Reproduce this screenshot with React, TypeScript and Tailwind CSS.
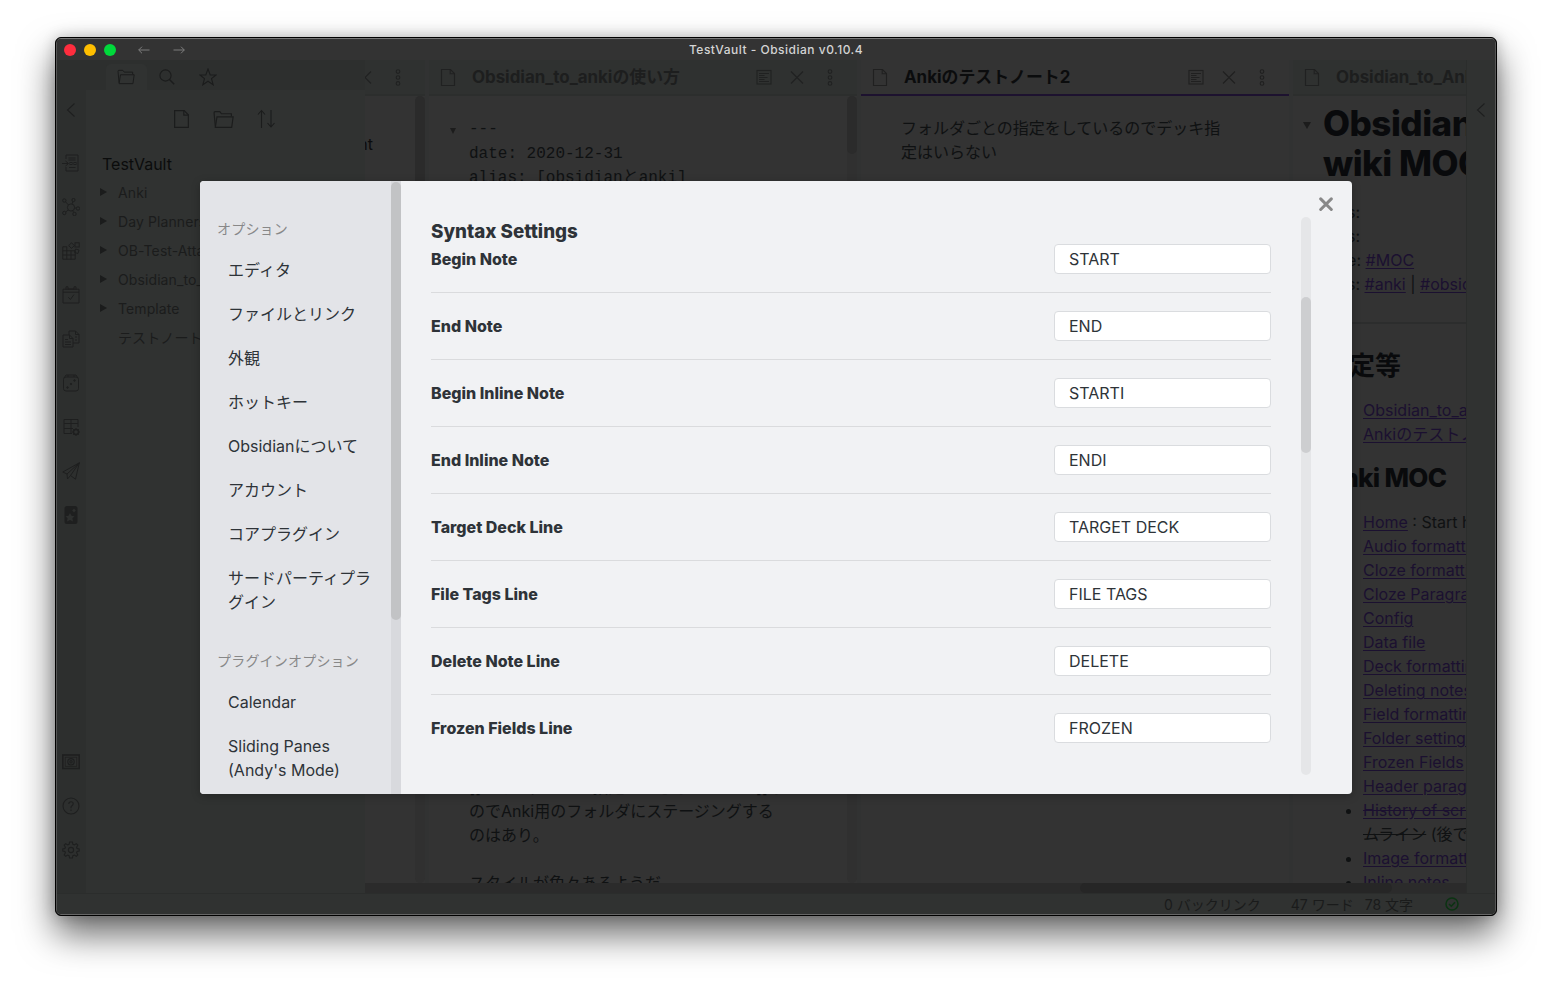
import React from "react";

type IconProps = { className?: string; children: React.ReactNode; box?: string; sw?: number };

function Icon({ className = "size-[18px]", children, box = "0 0 18 18", sw = 1.1 }: IconProps) {
  return (
    <svg
      viewBox={box}
      className={`shrink-0 ${className}`}
      fill="none"
      stroke="currentColor"
      strokeWidth={sw}
    >
      {children}
    </svg>
  );
}

const FileIcon = ({ className = "w-[16px] h-[19px]" }: { className?: string }) => (
  <Icon className={className} box="0 0 16 19">
    <path d="M1.5 1.5H10.5L14.5 5.5V17.5H1.5Z" />
    <path d="M10.2 1.5V5.8H14.5" />
  </Icon>
);

const FolderIcon = ({ className }: { className: string }) => (
  <Icon className={className} box="0 0 20 18">
    <path d="M2.2 15.5L1 2.5Q1 1.5 2 1.5H6.5L8 3.5H17.5V6" />
    <path d="M2.2 16.5L3.8 6.5H19.2L17.8 16.5Z" />
  </Icon>
);

const ChevronLeft = () => (
  <Icon className="h-[16px] w-[10px]" box="0 0 10 16">
    <path d="M8.5 1.5L1.5 8L8.5 14.5" />
  </Icon>
);

const PreviewIcon = () => (
  <Icon className="size-[16px]" box="0 0 16 16">
    <rect x="1" y="1.5" width="14" height="13.5" />
    <path d="M3 4.5H13M3 6.5H8.5M3 8.5H11.5M3 10.5H8.5M3 12.5H13" />
  </Icon>
);

const CloseIcon = () => (
  <Icon className="size-[14px]" box="0 0 14 14">
    <path d="M1 1.5L13 13.5M13 1.5L1 13.5" />
  </Icon>
);

const DotsIcon = () => (
  <Icon className="h-[17px] w-[6px]" box="0 0 6 17">
    <circle cx="3" cy="2.6" r="1.8" />
    <circle cx="3" cy="8.5" r="1.8" />
    <circle cx="3" cy="14.4" r="1.8" />
  </Icon>
);

const ribbonIcons: React.ReactNode[] = [
  <>
    <path d="M4 5V1H16V17H4V13" />
    <path d="M6.5 4H13.5M6.5 6H13.5M7 13.5H13.5M0 9.5H6M3.5 7L6.5 9.5L3.5 12" />
    <rect x="8" y="8.5" width="2" height="2" />
    <rect x="12" y="8.5" width="2" height="2" />
  </>,
  <>
    <circle cx="9" cy="9.5" r="3.6" />
    <circle cx="2.3" cy="2.5" r="1.7" />
    <circle cx="11.5" cy="2" r="1.6" />
    <circle cx="16" cy="10.5" r="1.7" />
    <circle cx="12.5" cy="16" r="1.7" />
    <circle cx="2.3" cy="15" r="1.7" />
    <path d="M3.5 3.8L6.5 7M10.9 3.5L10 6M12.5 9.8L14.4 10.2M10.5 12.7L11.8 14.4M6.3 12L3.6 14" />
  </>,
  <>
    <path d="M.8 4.8H4.8V8.8H13.2V17.2H.8ZM.8 8.8H4.8V17.2M.8 13H13.2M9 8.8V17.2" />
    <rect x="13" y=".8" width="4.2" height="4.2" />
    <path d="M9.5 .8L12.3 3.6L9.5 6.4L6.7 3.6Z" />
    <path d="M13.5 7L17 8L16 11.5L12.6 10.5Z" />
  </>,
  <>
    <path d="M1 3.2H17V17H1ZM1 6.2H17" />
    <path d="M4 3.5V.8H6V3.5M12 3.5V.8H14V3.5M6 3H12" />
    <path d="M6.3 11.2L8.4 13.5L12 8.5" />
  </>,
  <>
    <path d="M7 5V1H13.5L17 4.5V13H11M13.5 1V4.5H17" />
    <path d="M1 5H7.5L11 8.5V17H1ZM7.5 5V8.5H11" />
    <path d="M3 9.5H6M3 12H9M3 14.5H9M13 7H15M13 10H15" />
  </>,
  <>
    <rect x="1.5" y="3" width="15" height="14" rx="2.5" />
    <path d="M2 4L4 1H14L16 4M6 1V3M12 1V3" />
    <circle cx="5.5" cy="13.5" r=".7" fill="currentColor" />
    <circle cx="9" cy="10" r=".7" fill="currentColor" />
    <circle cx="12.5" cy="6.5" r=".7" fill="currentColor" />
  </>,
  <>
    <path d="M10 15.5H2V1.5H16V9M2 5.5H16M2 10.5H11M9 1.5V15.5" />
    <circle cx="14" cy="14" r="2.5" strokeWidth="1.4" />
    <path d="M14 10V12M14 16V18M10 14H12M16 14H18M11.2 11.2L12.5 12.5M15.5 15.5L16.8 16.8M16.8 11.2L15.5 12.5M12.5 15.5L11.2 16.8" />
  </>,
  <>
    <path d="M17.3 .8L.8 10L5 12L5.5 17L8.5 13.5L13.5 17.2Z" />
    <path d="M17.3 .8L5 12M17.3 .8L8.5 13.5" />
  </>,
  <>
    <path
      fill="currentColor"
      fillRule="evenodd"
      stroke="none"
      d="M5 0H13Q15.5 0 15.5 2.5V15.5Q15.5 18 13 18H5Q2.5 18 2.5 15.5V2.5Q2.5 0 5 0ZM8 7L9.5 9.8L12.5 10.2L10.4 12.3L11 15.4L8 14L5 15.4L5.6 12.3L3.5 10.2L6.5 9.8ZM12 2.5L10.2 4.5L12 6.5L13.8 4.5Z"
    />
  </>,
];

const ribbonBottom: React.ReactNode[] = [
  <>
    <rect x=".8" y="2" width="16.4" height="13.5" strokeWidth="1.6" />
    <rect x="3.2" y="4.2" width="11.6" height="9.1" strokeWidth=".8" />
    <circle cx="9" cy="8.8" r="3.2" />
    <circle cx="9" cy="8.8" r="1.2" />
  </>,
  <>
    <circle cx="9" cy="9" r="8" />
    <path d="M6.8 7Q6.8 4.8 9 4.8T11.2 6.8Q11.2 8 10 8.7T9 10.6V11.2M9 12.6V14" />
  </>,
  <>
    <circle cx="9" cy="9" r="2.6" />
    <path d="M7.6 1H10.4L10.9 3.3L12.3 3.9L14.3 2.7L15.8 4.2L14.6 6.2L15.1 7.5L17.2 8V10L15.1 10.5L14.6 11.8L15.8 13.8L14.3 15.3L12.3 14.1L10.9 14.7L10.4 17H7.6L7.1 14.7L5.7 14.1L3.7 15.3L2.2 13.8L3.4 11.8L2.9 10.5L.8 10V8L2.9 7.5L3.4 6.2L2.2 4.2L3.7 2.7L5.7 3.9L7.1 3.3Z" />
  </>,
];

function Ribbon() {
  return (
    <div className="flex w-[29px] shrink-0 flex-col items-center bg-[#2d2f2e] pr-[2px] text-[#1e1f1f]">
      <div className="mt-[42px] flex h-4 items-center">
        <ChevronLeft />
      </div>
      <div className="mt-[36px] flex flex-col gap-[26px]">
        {ribbonIcons.map((icon, i) => (
          <Icon key={i} sw={1}>{icon}</Icon>
        ))}
      </div>
      <div className="mt-auto mb-[34px] flex flex-col gap-[26px]">
        {ribbonBottom.map((icon, i) => (
          <Icon key={i} sw={1.1}>{icon}</Icon>
        ))}
      </div>
    </div>
  );
}

const folders = ["Anki", "Day Planners", "OB-Test-Attachments", "Obsidian_to_Anki", "Template"];

function Explorer() {
  return (
    <div className="flex w-[279px] shrink-0 flex-col bg-[#303231] text-[#1b1c1c]">
      <div className="flex h-[30px] shrink-0 items-end bg-[#2d2f2e] pl-[20px]">
        <div className="flex h-[26px] w-[41px] items-center justify-center rounded-t-[5px] bg-[#303231] pr-px">
          <FolderIcon className="h-[16px] w-[18px]" />
        </div>
        <div className="flex h-[26px] w-[41px] items-center justify-center pr-px">
          <Icon className="size-[16px]" box="0 0 16 16">
            <circle cx="6.5" cy="6.5" r="5.6" />
            <path d="M10.5 10.5L15.2 15.2" strokeWidth="1.5" />
          </Icon>
        </div>
        <div className="flex h-[26px] w-[41px] items-center justify-center pr-px">
          <Icon>
            <path d="M9 1L11.2 7H17L12.5 10.6L14.2 16.8L9 13.2L3.8 16.8L5.5 10.6L1 7H6.8Z" />
          </Icon>
        </div>
      </div>
      <div className="mt-[19px] flex h-5 items-center justify-center gap-[23px] pr-[3px]">
        <FileIcon className="h-[20px] w-[17px]" />
        <FolderIcon className="h-[19px] w-[21px]" />
        <Icon className="h-[20px] w-[19px]" box="0 0 19 20">
          <path d="M4.5 19V1.5M1 5.5L4.5 1.5L8 5.5M14 1V18M10.5 14L14 18L17.5 14" />
        </Icon>
      </div>
      <div className="mt-[23px] pl-4 text-base leading-6 text-[#0b0c0c]">TestVault</div>
      <div className="mt-[2px] text-[14px] leading-[29px] tracking-[0.1px] whitespace-nowrap">
        {folders.map((f) => (
          <div key={f} className="flex items-center pl-[14px]">
            <svg viewBox="0 0 7 8" className="mr-[11px] mb-[2px] h-2 w-[7px] shrink-0" fill="currentColor">
              <path d="M0 0L7 4L0 8Z" />
            </svg>
            {f}
          </div>
        ))}
        <div className="pl-8">テストノート</div>
      </div>
    </div>
  );
}

type PaneProps = {
  title: React.ReactNode;
  active?: boolean;
  children: React.ReactNode;
  scroll?: string;
};

function Pane({ title, active, children, scroll }: PaneProps) {
  return (
    <>
      <div className="flex w-[428px] shrink-0 flex-col">
        <div
          className={`flex h-9 shrink-0 items-center border-b-2 pr-6 pl-[11px] ${
            active
              ? "border-[#1d122f] bg-[#333333] text-[#202020]"
              : "border-[#2c2e2d] bg-[#2f3130] text-[#202121]"
          }`}
        >
          <FileIcon />
          <div
            className={`ml-4 flex-1 text-[16.9px] leading-6 font-bold whitespace-nowrap ${
              active ? "text-[#0b0c0d]" : "text-[#1d1e1e]"
            }`}
          >
            {title}
          </div>
          <PreviewIcon />
          <div className="ml-[18px]">
            <CloseIcon />
          </div>
          <div className="ml-[23px]">
            <DotsIcon />
          </div>
        </div>
        <div className="flex min-h-0 flex-1">
          <div className="min-w-0 flex-1 overflow-hidden">{children}</div>
          {scroll && (
            <div className="w-[10px] shrink-0 rounded-full bg-[#303030]">
              <div className={`w-full rounded-full bg-[#2b2b2b] ${scroll}`} />
            </div>
          )}
        </div>
      </div>
      <div className="w-1 shrink-0 bg-[#313232]" />
    </>
  );
}

const Link = ({ children }: { children: React.ReactNode }) => (
  <span className="text-[#1b1030] underline decoration-1 underline-offset-[2px]">{children}</span>
);

const wikiLinks = [
  "Audio formatting",
  "Cloze formatting",
  "Cloze Paragraph style",
  "Config",
  "Data file",
  "Deck formatting",
  "Deleting notes",
  "Field formatting",
  "Folder settings",
  "Frozen Fields",
  "Header paragraph style",
];

function Workspace() {
  return (
    <div className="flex min-w-0 flex-1 flex-col overflow-hidden bg-[#333333] text-[#0f1112]">
      <div className="flex min-h-0 flex-1 overflow-hidden">
        <div className="-ml-[368px] flex">
          <Pane title="Anki" scroll="h-[620px]">
            <div className="mt-[36px] w-[376px] text-right text-base leading-6 text-[#0b0c0d]">
              Attachment
            </div>
          </Pane>
          <Pane title="Obsidian_to_ankiの使い方" scroll="h-[58px]">
            <div className="pl-10 text-base whitespace-nowrap">
              <div className="relative mt-[21px] font-['Liberation_Mono','Noto_Sans_CJK_JP',monospace] leading-[24.5px]">
                <svg viewBox="0 0 6 6" className="absolute top-[11px] -left-[19px] size-[6px]" fill="#1c1c1c">
                  <path d="M0 0H6L3 6Z" />
                </svg>
                <div>---</div>
                <div>date: 2020-12-31</div>
                <div>alias: [obsidianとanki]</div>
              </div>
              <div className="mt-[584px] leading-6">
                <div>[[フォルダごとの指定ができる<span className="text-[#1b1030]">Obs Anki</span>]]な</div>
                <div>のでAnki用のフォルダにステージングする</div>
                <div>のはあり。</div>
                <div className="mt-6">スタイルが色々あるようだ</div>
              </div>
            </div>
          </Pane>
          <Pane title="Ankiのテストノート2" active>
            <div className="mt-5 w-[360px] pl-10 text-base leading-6">
              フォルダごとの指定をしているのでデッキ指定はいらない
            </div>
          </Pane>
          <Pane title="Obsidian_to_Anki wiki">
            <div className="relative pl-[30px] text-base leading-6 whitespace-nowrap">
              <svg viewBox="0 0 8 7" className="absolute top-[26px] left-[10px] h-[7px] w-2" fill="#1c1c1c">
                <path d="M0 0H8L4 7Z" />
              </svg>
              <h1 className="pt-[7px] text-[35px] leading-10 font-extrabold tracking-[-0.5px] text-[#090a0c]">
                Obsidian_to_Anki
                <br />
                wiki MOC
              </h1>
              <div className="mt-[17px] -ml-[4px]">
                <div>Tags:</div>
                <div>Tags:</div>
                <div>Type: <Link>#MOC</Link></div>
                <div>Tags: <Link>#anki</Link> | <Link>#obsidian</Link></div>
              </div>
              <div className="mt-[26px] h-[2px] bg-[#2c2d2d]" />
              <h2 className="mt-[23px] text-[26px] leading-[38px] font-bold text-[#090a0c]">設定等</h2>
              <ul className="mt-[13px] list-disc pl-10">
                <li><Link>Obsidian_to_ankiの使い方</Link></li>
                <li><Link>Ankiのテストノート</Link></li>
              </ul>
              <h2 className="mt-[13px] text-[26px] leading-[38px] font-extrabold tracking-[-0.7px] text-[#090a0c]">Anki MOC</h2>
              <ul className="mt-[13px] list-disc pl-10">
                <li><Link>Home</Link> : Start here</li>
                {wikiLinks.map((l) => (
                  <li key={l}><Link>{l}</Link></li>
                ))}
                <li>
                  <span className="text-[#1b1030] underline-offset-[2px] [text-decoration-line:underline_line-through]">History of script</span>
                  <br />
                  <span className="line-through">ムライン</span> (後で確認)
                </li>
                <li><Link>Image formatting</Link></li>
                <li><Link>Inline notes</Link></li>
              </ul>
            </div>
          </Pane>
        </div>
      </div>
      <div className="flex h-[10px] shrink-0 bg-[#2b2b2b] pl-[715px]">
        <div className="w-[312px] rounded-full bg-[#262626]" />
      </div>
    </div>
  );
}

const optionItems = [
  "エディタ",
  "ファイルとリンク",
  "外観",
  "ホットキー",
  "Obsidianについて",
  "アカウント",
  "コアプラグイン",
  "サードパーティプラグイン",
];

const settings: [string, string][] = [
  ["Begin Note", "START"],
  ["End Note", "END"],
  ["Begin Inline Note", "STARTI"],
  ["End Inline Note", "ENDI"],
  ["Target Deck Line", "TARGET DECK"],
  ["File Tags Line", "FILE TAGS"],
  ["Delete Note Line", "DELETE"],
  ["Frozen Fields Line", "FROZEN"],
];

function NavItem({ children }: { children: React.ReactNode }) {
  return <div className="py-[10px] pr-4 pl-7 text-base leading-6 break-all">{children}</div>;
}

function SettingsModal() {
  return (
    <div className="absolute top-[181px] left-[200px] flex h-[613px] w-[1152px] overflow-hidden rounded-[4px] bg-[#f1f2f4] text-[#2e3338] shadow-[0_2px_8px_rgba(0,0,0,0.25)]">
      <div className="w-[191px] shrink-0 overflow-hidden bg-[#e3e4e8]">
        <div className="mt-[38px] pl-[17px] text-[14px] leading-5 tracking-[0.2px] text-[#888888]">オプション</div>
        <div className="mt-[9px]">
          {optionItems.map((t) => (
            <NavItem key={t}>{t}</NavItem>
          ))}
        </div>
        <div className="mt-[27px] mb-[9px] pl-[17px] text-[14px] leading-5 tracking-[0.2px] text-[#888888]">プラグインオプション</div>
        <NavItem>Calendar</NavItem>
        <NavItem>
          Sliding Panes
          <br />
          (Andy's Mode)
        </NavItem>
      </div>
      <div className="w-[10px] shrink-0 bg-[#d8d9dd] pt-px">
        <div className="h-[438px] rounded-full bg-[#c2c3c5]" />
      </div>
      <div className="ml-[30px] w-[840px] shrink-0 pt-[38px]">
        <h3 className="text-[18.8px] leading-[25px] font-extrabold">Syntax Settings</h3>
        {settings.map(([label, value], i) => (
          <div
            key={label}
            className={`flex items-center justify-between pb-[18px] ${
              i === 0 ? "" : "border-t border-[#dadbdd] pt-[18px]"
            }`}
          >
            <div className="text-base font-extrabold">{label}</div>
            <input
              readOnly
              value={value}
              className="h-[30px] w-[217px] rounded-[4px] border border-[#dadcdf] bg-white px-[14px] text-base outline-none"
            />
          </div>
        ))}
      </div>
      <div className="mt-9 ml-[30px] h-[558px] w-[10px] rounded-full bg-[#e5e6e8] pt-20">
        <div className="h-[156px] rounded-full bg-[#cdced0]" />
      </div>
      <svg
        viewBox="0 0 14 14"
        className="mt-4 ml-2 size-[14px]"
        stroke="#888888"
        strokeWidth="3"
        strokeLinecap="round"
      >
        <path d="M1.7 1.9L12.3 12.5M12.3 1.9L1.7 12.5" />
      </svg>
    </div>
  );
}

export default function App() {
  return (
    <div className="relative h-[989px] w-[1552px] overflow-hidden bg-white px-[55px] pt-[37px] font-[Inter,'Noto_Sans_CJK_JP',sans-serif]">
      <div className="h-[879px] w-[1442px] overflow-hidden rounded-[6px] border border-black bg-black shadow-[0_18px_36px_rgba(0,0,0,0.6),0_0_14px_rgba(0,0,0,0.2)]">
        <div className="flex h-full flex-col overflow-hidden rounded-[5px] border border-t-[#777777] border-r-[#555555] border-b-[#666666] border-l-[#555555] bg-[#303231]">
          <div className="relative flex h-[21px] shrink-0 items-center bg-[#333333] pl-[7px]">
            <div className="flex gap-2">
              <span className="size-3 rounded-full bg-[#ff2d3e]" />
              <span className="size-3 rounded-full bg-[#ffbf00]" />
              <span className="size-3 rounded-full bg-[#00d93b]" />
            </div>
            <div className="ml-[22px] flex gap-[23px] text-[#7d7d7d]">
              <Icon className="h-2 w-3" box="0 0 12 8" sw={1}>
                <path d="M.7 4H11.5M4 .7L.7 4L4 7.3" />
              </Icon>
              <Icon className="h-2 w-3" box="0 0 12 8" sw={1}>
                <path d="M.5 4H11.3M8 .7L11.3 4L8 7.3" />
              </Icon>
            </div>
            <div className="absolute inset-0 flex items-center justify-center text-xs font-medium tracking-[0.5px] text-[#d4d4d4]">
              TestVault - Obsidian v0.10.4
            </div>
          </div>
          <div className="flex min-h-0 flex-1">
            <Ribbon />
            <Explorer />
            <Workspace />
            <div className="flex w-[29px] shrink-0 flex-col items-center border-l border-[#2b2d2c] bg-[#303231] pt-[42px] text-[#1e1f1f]">
              <ChevronLeft />
            </div>
          </div>
          <div className="flex h-[21px] shrink-0 items-center justify-end border-t border-[#2b2d2c] bg-[#303231] pr-9 text-[14px] text-[#1a1b1b]">
            <span>0 バックリンク</span>
            <span className="ml-[30px]">47 ワード</span>
            <span className="ml-[11px]">78 文字</span>
            <svg viewBox="0 0 14 14" className="ml-8 size-[14px]" fill="none" stroke="#0b3312" strokeWidth="1.5">
              <circle cx="7" cy="7" r="6" />
              <path d="M4 7L6.3 9.2L10 5.2" />
            </svg>
          </div>
        </div>
      </div>
      <SettingsModal />
    </div>
  );
}
